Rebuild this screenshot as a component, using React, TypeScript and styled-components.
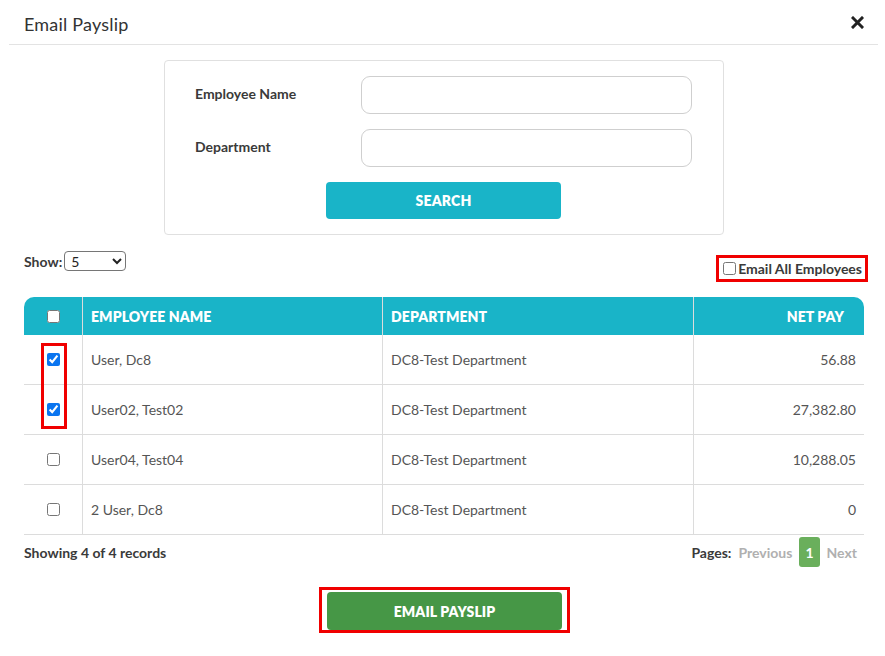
import React from "react";
import styled, { createGlobalStyle } from "styled-components";

const Global = createGlobalStyle`
  html, body { margin: 0; padding: 0; background: #fff; }
  body { font-family: Lato, "Noto Sans", "Liberation Sans", sans-serif; color: #333; }
  * { box-sizing: border-box; }
`;

const Page = styled.div`
  width: 885px;
  min-height: 656px;
  background: #fff;
`;

const Header = styled.div`
  height: 45px;
  margin: 0 7px 0 9px;
  padding: 3px 14px 0 15px;
  display: flex;
  align-items: center;
  justify-content: space-between;
  border-bottom: 1px solid #e3e3e3;
`;

const Title = styled.h1`
  margin: 0;
  font-size: 18px;
  font-weight: 400;
  color: #333;
  letter-spacing: 0.2px;
`;

const Close = styled.button`
  border: 0;
  background: none;
  padding: 0;
  width: 13px;
  height: 13px;
  display: flex;
  cursor: pointer;
  margin-top: -3px;
`;

const Body = styled.div`
  padding: 0 21px 0 24px;
  display: flex;
  flex-direction: column;
`;

const SearchPanel = styled.div`
  margin: 15px auto 0;
  width: 560px;
  border: 1px solid #e0e0e0;
  border-radius: 4px;
  padding: 15px 31px 15px 30px;
  display: grid;
  grid-template-columns: 166px 331px;
  row-gap: 15px;
  align-items: center;
`;

const Label = styled.label`
  font-size: 14px;
  font-weight: 700;
  color: #3a3a3a;
  margin-top: -4px;
`;

const TextInput = styled.input`
  height: 38px;
  width: 331px;
  border: 1px solid #cfcfcf;
  border-radius: 9px;
  padding: 0 12px;
  font: inherit;
  outline: none;
`;

const SearchButton = styled.button`
  grid-column: 1 / -1;
  justify-self: center;
  width: 235px;
  height: 37px;
  border: 0;
  border-radius: 4px;
  background: #19b4c8;
  color: #fff;
  font-family: inherit;
  font-weight: 800;
  font-size: 14px;
  letter-spacing: 0.2px;
`;

const Controls = styled.div`
  margin-top: 16px;
  height: 30px;
  display: flex;
  justify-content: space-between;
`;

const ShowWrap = styled.div`
  align-self: flex-start;
  display: flex;
  align-items: center;
  gap: 2px;
  font-size: 14px;
  font-weight: 700;
  color: #3a3a3a;
`;

const Select = styled.select`
  width: 62px;
  height: 20px;
  border: 1px solid #767676;
  border-radius: 4px;
  font-family: inherit;
  font-size: 14px;
  padding: 0 2px;
  background: #fff;
  color: #222;
`;

const EmailAll = styled.label`
  align-self: flex-end;
  margin-right: -4px;
  margin-bottom: -1px;
  height: 27px;
  border: 3px solid #f00000;
  padding: 0 3px 0 4px;
  display: flex;
  align-items: center;
  gap: 2px;
  font-size: 14px;
  font-weight: 700;
  color: #3a3a3a;
`;

const Check = styled.input.attrs({ type: "checkbox" })`
  width: 13px;
  height: 13px;
  margin: 0;
  accent-color: #0a75f0;
`;

const TableWrap = styled.div`
  position: relative;
  margin-top: 16px;
`;

const Table = styled.table`
  width: 840px;
  border-collapse: separate;
  border-spacing: 0;
  table-layout: fixed;
  font-size: 14px;
`;

const Th = styled.th<{ $align?: string; $first?: boolean; $last?: boolean }>`
  height: 38px;
  background: #19b4c8;
  color: #fff;
  font-weight: 800;
  text-transform: uppercase;
  text-align: ${(p) => p.$align || "left"};
  padding: ${(p) => (p.$last ? "0 20px 0 8px" : "0 8px")};
  border-left: ${(p) => (p.$first ? "0" : "1px solid #dcdcdc")};
  border-top-left-radius: ${(p) => (p.$first ? "10px" : "0")};
  border-top-right-radius: ${(p) => (p.$last ? "10px" : "0")};
  letter-spacing: 0.1px;
`;

const Td = styled.td<{ $align?: string; $first?: boolean }>`
  height: 50px;
  color: #555;
  text-align: ${(p) => p.$align || "left"};
  padding: 0 8px;
  border-bottom: 1px solid #dcdcdc;
  border-left: ${(p) => (p.$first ? "0" : "1px solid #dcdcdc")};
`;

const CheckCell = styled.div`
  display: flex;
  justify-content: center;
  padding-left: 1px;
`;

const Highlight = styled.div`
  position: absolute;
  left: 17px;
  top: 46px;
  width: 26px;
  height: 86px;
  border: 3px solid #f00000;
  pointer-events: none;
`;

const Footer = styled.div`
  margin-top: 2px;
  height: 30px;
  display: flex;
  align-items: center;
  justify-content: space-between;
  font-size: 14px;
`;

const Showing = styled.span`
  font-weight: 700;
  color: #3a3a3a;
`;

const Pager = styled.div`
  display: flex;
  align-items: center;
  height: 100%;
  gap: 7px;
  padding-right: 7px;
  font-weight: 700;
`;

const PagerLabel = styled.span`
  color: #3a3a3a;
`;

const PageLink = styled.span<{ $active?: boolean }>`
  color: ${(p) => (p.$active ? "#fff" : "#b0b0b0")};
  background: ${(p) => (p.$active ? "#6aaf5c" : "transparent")};
  height: 100%;
  display: flex;
  align-items: center;
  padding: ${(p) => (p.$active ? "0 6px" : "0")};
  border-radius: 3px;
`;

const ActionWrap = styled.div`
  align-self: center;
  margin: 20px 0 0 1px;
  border: 3px solid #f00000;
  padding: 2px 5px 0 5px;
  height: 46px;
`;

const EmailButton = styled.button`
  width: 235px;
  height: 38px;
  border: 0;
  border-radius: 4px;
  background: #469746;
  color: #fff;
  font-family: inherit;
  font-weight: 800;
  font-size: 14px;
  letter-spacing: 0.1px;
`;

const rows = [
  { name: "User, Dc8", dept: "DC8-Test Department", pay: "56.88", checked: true },
  { name: "User02, Test02", dept: "DC8-Test Department", pay: "27,382.80", checked: true },
  { name: "User04, Test04", dept: "DC8-Test Department", pay: "10,288.05", checked: false },
  { name: "2 User, Dc8", dept: "DC8-Test Department", pay: "0", checked: false },
];

export default function App() {
  return (
    <Page>
      <Global />
      <Header>
        <Title>Email Payslip</Title>
        <Close aria-label="Close">
          <svg width="13" height="13" viewBox="0 0 13 13">
            <path d="M2 2 L11 11 M11 2 L2 11" stroke="#222" strokeWidth="3" strokeLinecap="square" />
          </svg>
        </Close>
      </Header>
      <Body>
        <SearchPanel>
          <Label>Employee Name</Label>
          <TextInput />
          <Label>Department</Label>
          <TextInput />
          <SearchButton>SEARCH</SearchButton>
        </SearchPanel>
        <Controls>
          <ShowWrap>
            Show:
            <Select defaultValue="5">
              <option>5</option>
              <option>10</option>
              <option>25</option>
            </Select>
          </ShowWrap>
          <EmailAll>
            <Check />
            Email All Employees
          </EmailAll>
        </Controls>
        <TableWrap>
          <Table>
            <colgroup>
              <col style={{ width: 58 }} />
              <col style={{ width: 300 }} />
              <col style={{ width: 311 }} />
              <col style={{ width: 171 }} />
            </colgroup>
            <thead>
              <tr>
                <Th $first>
                  <CheckCell>
                    <Check />
                  </CheckCell>
                </Th>
                <Th>Employee Name</Th>
                <Th>Department</Th>
                <Th $align="right" $last>
                  Net Pay
                </Th>
              </tr>
            </thead>
            <tbody>
              {rows.map((r) => (
                <tr key={r.name}>
                  <Td $first>
                    <CheckCell>
                      <Check defaultChecked={r.checked} />
                    </CheckCell>
                  </Td>
                  <Td>{r.name}</Td>
                  <Td>{r.dept}</Td>
                  <Td $align="right">{r.pay}</Td>
                </tr>
              ))}
            </tbody>
          </Table>
          <Highlight />
        </TableWrap>
        <Footer>
          <Showing>Showing 4 of 4 records</Showing>
          <Pager>
            <PagerLabel>Pages:</PagerLabel>
            <PageLink>Previous</PageLink>
            <PageLink $active>1</PageLink>
            <PageLink>Next</PageLink>
          </Pager>
        </Footer>
        <ActionWrap>
          <EmailButton>EMAIL PAYSLIP</EmailButton>
        </ActionWrap>
      </Body>
    </Page>
  );
}
